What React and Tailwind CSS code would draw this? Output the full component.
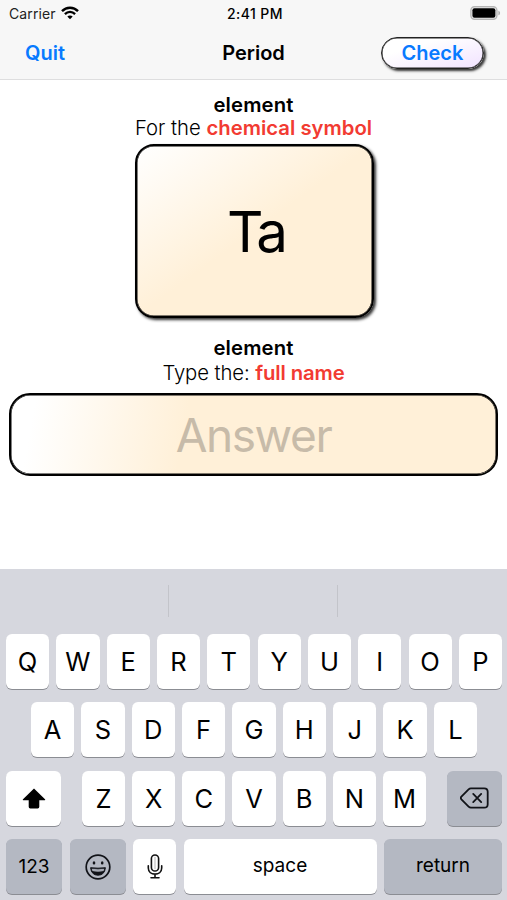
import React, { useState } from 'react';
import clsx from 'clsx';

const TOP_ROW = ['Q', 'W', 'E', 'R', 'T', 'Y', 'U', 'I', 'O', 'P'];
const HOME_ROW = ['A', 'S', 'D', 'F', 'G', 'H', 'J', 'K', 'L'];
const BOTTOM_ROW = ['Z', 'X', 'C', 'V', 'B', 'N', 'M'];

function WifiIcon() {
  return (
    <svg width="18" height="14" viewBox="0 0 18 14" fill="none" stroke="#000">
      <path d="M1 5.2C5.4 0.6 12.6 0.6 17 5.2" strokeWidth="2.4" />
      <path d="M3.9 8.1C6.8 5.2 11.2 5.2 14.1 8.1" strokeWidth="2.3" />
      <path d="M9 13.3L6.3 10.5C7.8 9 10.2 9 11.7 10.5Z" fill="#000" stroke="none" />
    </svg>
  );
}

function BatteryIcon() {
  return (
    <svg width="31" height="14" viewBox="0 0 31 14">
      <rect x="0.9" y="0.8" width="26" height="12.4" rx="3.6" fill="#f7f7f7" stroke="#b5b5b5" strokeWidth="1.4" />
      <rect x="2.4" y="2.3" width="23" height="9.4" rx="2" fill="#000" />
      <path d="M28.4 4.7C30.6 5.4 30.6 8.6 28.4 9.3Z" fill="#b0b0b0" />
    </svg>
  );
}

function ShiftIcon() {
  return (
    <svg width="24" height="21" viewBox="0 0 24 21" className="mt-px">
      <path d="M12 0.6L23 11.2Q23.8 12.3 22.6 12.3H17.3V18.8Q17.3 20.4 15.7 20.4H8.3Q6.7 20.4 6.7 18.8V12.3H1.4Q0.2 12.3 1 11.2Z" fill="#000" />
    </svg>
  );
}

function DeleteIcon() {
  return (
    <svg width="29" height="22" viewBox="0 0 29 22" fill="none" stroke="#111318" strokeWidth="1.8" strokeLinecap="round" strokeLinejoin="round">
      <path d="M11 1.3H24.2Q27.7 1.3 27.7 4.8V17.2Q27.7 20.7 24.2 20.7H11Q9.6 20.7 8.6 19.7L1.4 12.3Q0.2 11 1.4 9.7L8.6 2.3Q9.6 1.3 11 1.3Z" />
      <path d="M13.2 6.9L21.2 15.1M21.2 6.9L13.2 15.1" />
    </svg>
  );
}

function EmojiIcon() {
  return (
    <svg width="26" height="26" viewBox="0 0 26 26">
      <circle cx="13" cy="13" r="11.8" fill="none" stroke="#111318" strokeWidth="1.7" />
      <ellipse cx="9" cy="8.9" rx="1.3" ry="1.6" fill="#111318" />
      <ellipse cx="17.2" cy="8.9" rx="1.3" ry="1.6" fill="#111318" />
      <path d="M5.6 13.7Q13 14.7 20.4 13.7Q19.6 21.2 13 21.2Q6.4 21.2 5.6 13.7Z" fill="#111318" stroke="#111318" strokeLinejoin="round" />
      <path d="M6.7 14.8Q13 15.7 19.3 14.8L18.6 17.1Q13 18.4 7.4 17.1Z" fill="#a4a8b2" />
    </svg>
  );
}

function MicIcon() {
  return (
    <svg width="16" height="25" viewBox="0 0 16 25" fill="none" stroke="#111" strokeWidth="1.6" strokeLinecap="round">
      <rect x="4.4" y="1" width="7.2" height="16" rx="3.6" />
      <path d="M1.3 11.8V14C1.3 22.2 14.7 22.2 14.7 14V11.8M8 20.3V23.7M4 23.7H12" />
      <path d="M8 3.2V14.8" stroke="#aaa" strokeWidth="0.9" />
    </svg>
  );
}

function Key({ children, className, dark, label, onPress }) {
  return (
    <button
      type="button"
      aria-label={label}
      onClick={onPress}
      className={clsx(
        'flex h-[55px] items-center justify-center rounded-[6px] text-black shadow-[0_1px_0.5px_#8b8d93]',
        dark ? 'bg-[#b4b8c2]' : 'bg-white',
        className
      )}
    >
      {children}
    </button>
  );
}

function LetterKeys({ letters, onType }) {
  return letters.map((letter) => (
    <Key key={letter} className="w-[43.2px] pt-0.5 text-[25.5px]" onPress={() => onType(letter)}>
      {letter}
    </Key>
  ));
}

function Keyboard({ onType, onDelete }) {
  return (
    <section className="flex h-[331px] flex-col bg-[#d6d7de]">
      <div className="grid h-[64.5px] grid-cols-3 pt-4">
        <div className="h-8 border-r border-[#c3c4ca]" />
        <div className="h-8 border-r border-[#c3c4ca]" />
      </div>
      <div className="flex flex-col gap-[13.5px] pr-[5px] pl-[6px]">
        <div className="flex justify-between">
          <LetterKeys letters={TOP_ROW} onType={onType} />
        </div>
        <div className="flex justify-between px-[25px]">
          <LetterKeys letters={HOME_ROW} onType={onType} />
        </div>
        <div className="flex justify-between">
          <Key className="w-[55px]" label="Shift"><ShiftIcon /></Key>
          <div className="flex gap-[7px]">
            <LetterKeys letters={BOTTOM_ROW} onType={onType} />
          </div>
          <Key className="w-[55px]" dark label="Delete" onPress={onDelete}><DeleteIcon /></Key>
        </div>
        <div className="flex justify-between text-[19px]">
          <Key className="w-[56px] pt-0.5" dark>123</Key>
          <Key className="w-[56px]" dark label="Emoji"><EmojiIcon /></Key>
          <Key className="w-[43px]" label="Dictate"><MicIcon /></Key>
          <Key className="w-[193px]" onPress={() => onType(' ')}>space</Key>
          <Key className="w-[118px]" dark>return</Key>
        </div>
      </div>
    </section>
  );
}

function App() {
  const [answer, setAnswer] = useState('');

  return (
    <div className="flex h-[900px] w-[507px] flex-col overflow-hidden bg-white font-['Inter',sans-serif] text-black">
      <header className="h-20 border-b border-[#dededf] bg-[#f7f7f7]">
        {/* Status bar */}
        <div className="grid h-[26px] grid-cols-3 items-center pr-1.5 pl-[9px] text-[14px]">
          <div className="flex items-center gap-[5px] text-[#222]"><span className="tracking-[0.1px]">Carrier</span> <WifiIcon /></div>
          <div className="text-center font-medium tracking-[0.4px]">2:41 PM</div>
          <div className="flex justify-end"><BatteryIcon /></div>
        </div>

        {/* Navigation bar */}
        <div className="grid h-[53px] grid-cols-3 items-center text-[20px] font-semibold">
          <button type="button" className="pl-[25px] text-left text-[#087aff]">Quit</button>
          <h1 className="text-center">Period</h1>
          <button
            type="button"
            className="mr-[23px] h-8 w-[103px] justify-self-end rounded-full border border-[#222] bg-linear-to-br from-white from-30% to-[#f1e2ff] text-[#087aff] shadow-[inset_0_0_0_0.5px_#222,2px_2px_2.5px_#333]"
          >
            Check
          </button>
        </div>
      </header>

      <main className="flex flex-1 flex-col items-center text-[20.3px] leading-[23px]">
        <h2 className="mt-[13px] font-semibold tracking-[0.15px]">element</h2>
        <p className="font-light">For the <span className="font-semibold text-[#f23b32]">chemical symbol</span></p>
        <div className="mt-[4.5px] ml-px flex h-[174px] w-[239px] items-center justify-center rounded-[19px] border-2 border-black bg-linear-to-br from-white to-[#fff0d8] to-50% pt-0.5 pl-1 text-[56.5px] tracking-[-3px] shadow-[inset_0_0_0_0.5px_black,2px_2px_3px_#333]">
          Ta
        </div>
        <h2 className="mt-[18.5px] font-semibold tracking-[0.15px]">element</h2>
        <p className="mt-0.5 font-light tracking-[-0.1px]">Type the: <span className="font-semibold text-[#f23b32]">full name</span></p>
        <input
          value={answer}
          onChange={(e) => setAnswer(e.target.value)}
          placeholder="Answer"
          className="mt-[9px] h-[83px] w-[489px] rounded-[21px] border-2 border-black bg-[linear-gradient(100deg,white_5%,#fff0d8_36%)] text-center text-[46px] tracking-[-1.4px] shadow-[inset_0_0_0_0.5px_black] outline-none placeholder:text-[#c7bba9]"
        />
      </main>

      <Keyboard
        onType={(char) => setAnswer((prev) => prev + char)}
        onDelete={() => setAnswer((prev) => prev.slice(0, -1))}
      />
    </div>
  );
}

export default App;
